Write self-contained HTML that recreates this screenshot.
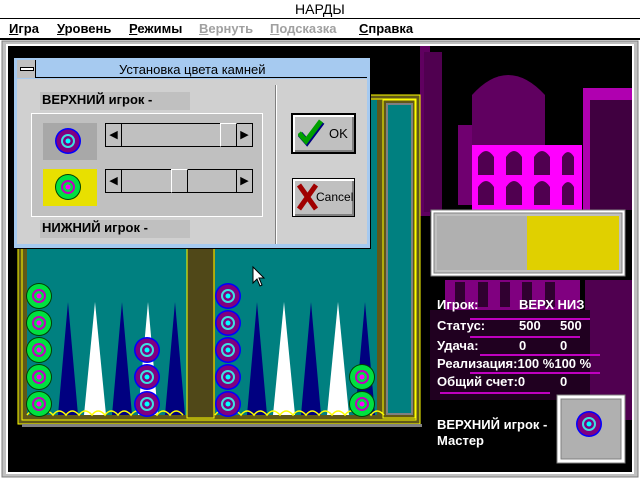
<!DOCTYPE html>
<html><head><meta charset="utf-8"><style>
*{margin:0;padding:0;box-sizing:border-box}
body{width:640px;height:480px;overflow:hidden;background:#000;font-family:"Liberation Sans","DejaVu Sans",sans-serif;position:relative}
.abs{position:absolute}
.t{position:absolute;font-size:13px;font-weight:bold;color:#000;white-space:nowrap}
.w{color:#fff;font-size:13px;font-weight:bold;position:absolute;white-space:nowrap}
u{text-decoration:underline}
</style></head><body>
<div class="abs" style="left:0;top:0;width:640px;height:19px;background:#fff;border-bottom:1px solid #000"></div>
<div class="t" style="left:295px;top:1px;font-weight:normal;font-size:14px">НАРДЫ</div>
<div class="abs" style="left:0;top:19px;width:640px;height:20px;background:#fff;border-bottom:1px solid #000"></div>
<div class="t" style="left:9px;top:21px"><u>И</u>гра</div>
<div class="t" style="left:57px;top:21px"><u>У</u>ровень</div>
<div class="t" style="left:129px;top:21px"><u>Р</u>ежимы</div>
<div class="t" style="left:199px;top:21px;color:#a0a0a0"><u>В</u>ернуть</div>
<div class="t" style="left:270px;top:21px;color:#a0a0a0"><u>П</u>одсказка</div>
<div class="t" style="left:359px;top:21px"><u>С</u>правка</div>
<svg class="abs" style="left:0;top:40px" width="640" height="440" viewBox="0 40 640 440">
<rect x="0" y="40" width="640" height="440" fill="#fff"/>
<rect x="2" y="41" width="636" height="436" fill="#c0c0c0" stroke="#808080"/>
<rect x="6" y="44" width="628" height="430" fill="#fff"/>
<rect x="8" y="46" width="624" height="426" fill="#000"/>
<!-- architecture -->
<rect x="420" y="46" width="10" height="170" fill="#600060"/>
<rect x="424" y="52" width="18" height="160" fill="#500050"/>
<path d="M472 150 V95 Q508 55 545 95 V150Z" fill="#600060"/>
<rect x="458" y="125" width="14" height="80" fill="#700070"/>
<rect x="472" y="145" width="110" height="65" fill="#ff00ff"/>
<rect x="583" y="88" width="49" height="122" fill="#b000b0"/>
<rect x="590" y="100" width="42" height="110" fill="#400040"/>
<g fill="#500050">
<path d="M478 175v-18q8-12 16 0v18z M506 175v-18q8-12 16 0v18z M534 175v-18q8-12 16 0v18z M562 175v-18q6-10 12 0v18z M478 205v-18q8-12 16 0v18z M506 205v-18q8-12 16 0v18z M534 205v-18q8-12 16 0v18z M562 205v-18q6-10 12 0v18z"/>
</g>
<rect x="445" y="280" width="135" height="30" fill="#800080"/>
<g fill="#300030"><rect x="455" y="282" width="10" height="25"/><rect x="478" y="282" width="10" height="25"/><rect x="500" y="282" width="10" height="25"/><rect x="522" y="282" width="10" height="25"/><rect x="545" y="282" width="10" height="25"/></g>
<rect x="585" y="280" width="47" height="140" fill="#500050"/>
<rect x="430" y="310" width="160" height="90" fill="#200020"/>
<g fill="#c000c0"><rect x="470" y="318" width="120" height="2"/><rect x="470" y="336" width="110" height="2"/><rect x="480" y="354" width="120" height="2"/><rect x="470" y="372" width="130" height="2"/><rect x="440" y="392" width="110" height="2"/></g>
<!-- board -->
<rect x="18" y="95" width="402" height="329" fill="#605818" stroke="#ffff00"/>
<rect x="22" y="99" width="394" height="321" fill="none" stroke="#ffff00"/>
<rect x="27" y="100" width="160" height="315" fill="#008080"/>
<rect x="215" y="100" width="162" height="315" fill="#008080"/>
<rect x="187" y="100" width="27" height="318" fill="#504818" stroke="#ffff00"/>
<rect x="383" y="100" width="32" height="318" fill="#605818" stroke="#ffff00"/>
<rect x="387" y="104" width="25" height="310" fill="#008080" stroke="#808080" stroke-width="2"/>
<rect x="22" y="424" width="400" height="3" fill="#808080"/>
<!-- spires -->
<g>
<polygon points="68,302 78,415 58,415" fill="#000080"/><polygon points="95,302 106,415 84,415" fill="#fff"/>
<polygon points="122,302 132,415 112,415" fill="#000080"/><polygon points="148,302 158,415 138,415" fill="#fff"/>
<polygon points="175,302 185,415 165,415" fill="#000080"/>
<polygon points="257,302 267,415 247,415" fill="#000080"/><polygon points="284,302 295,415 273,415" fill="#fff"/>
<polygon points="311,302 321,415 301,415" fill="#000080"/><polygon points="338,302 349,415 327,415" fill="#fff"/>
<polygon points="365,302 375,415 355,415" fill="#000080"/>
</g>
<path d="M27 415 q6 -8 13 0 q6 -8 13 0 q6-8 13 0 q6-8 13 0 q6-8 13 0 q6-8 13 0 q6-8 13 0 q6-8 13 0 q6-8 13 0 q6-8 13 0 q6-8 13 0 q6-8 13 0 M215 415 q6 -8 13 0 q6 -8 13 0 q6-8 13 0 q6-8 13 0 q6-8 13 0 q6-8 13 0 q6-8 13 0 q6-8 13 0 q6-8 13 0 q6-8 13 0 q6-8 13 0 q6-8 13 0 q6-8 13 0" fill="none" stroke="#ffff00" stroke-width="1.5"/>
<defs>
<g id="gc"><circle r="13" fill="#004000"/><circle r="12" fill="#00e040"/><circle r="6" fill="none" stroke="#c000c0" stroke-width="2"/><circle r="2.5" fill="#ff00ff"/></g>
<g id="pc"><circle r="13" fill="#0000ff"/><circle r="11.5" fill="#800080"/><circle r="6" fill="none" stroke="#40e0e0" stroke-width="2"/><circle r="2.5" fill="#00ffff"/></g>
</defs>
<use href="#gc" x="39" y="296"/><use href="#gc" x="39" y="323"/><use href="#gc" x="39" y="350"/><use href="#gc" x="39" y="377"/><use href="#gc" x="39" y="404"/>
<use href="#pc" x="147" y="350"/><use href="#pc" x="147" y="377"/><use href="#pc" x="147" y="404"/>
<use href="#pc" x="228" y="296"/><use href="#pc" x="228" y="323"/><use href="#pc" x="228" y="350"/><use href="#pc" x="228" y="377"/><use href="#pc" x="228" y="404"/>
<use href="#gc" x="362" y="377"/><use href="#gc" x="362" y="404"/>
<path d="M253 267 v16 l4 -4 l3 7 l2 -1 l-3 -7 h5z" fill="#fff" stroke="#000"/>
<!-- color box -->
<rect x="431" y="210" width="194" height="66" fill="#fff" stroke="#808080"/>
<rect x="434" y="213" width="188" height="60" fill="#c0c0c0" stroke="#808080"/>
<rect x="437" y="216" width="90" height="54" fill="#b0b0b0"/>
<rect x="527" y="216" width="92" height="54" fill="#e0d000"/>
<!-- bottom box -->
<rect x="557" y="395" width="68" height="68" fill="#fff" stroke="#808080"/>
<rect x="561" y="399" width="60" height="60" fill="#b0b0b0" stroke="#808080"/>
<use href="#pc" x="589" y="424"/>
</svg>
<div class="w" style="left:437px;top:297px">Игрок:</div><div class="w" style="left:519px;top:297px">ВЕРХ НИЗ</div>
<div class="w" style="left:437px;top:318px">Статус:</div><div class="w" style="left:519px;top:318px">500</div><div class="w" style="left:560px;top:318px">500</div>
<div class="w" style="left:437px;top:338px">Удача:</div><div class="w" style="left:519px;top:338px">0</div><div class="w" style="left:560px;top:338px">0</div>
<div class="w" style="left:437px;top:356px">Реализация:100 %100 %</div>
<div class="w" style="left:437px;top:374px">Общий счет:0</div><div class="w" style="left:560px;top:374px">0</div>
<div class="w" style="left:437px;top:417px">ВЕРХНИЙ игрок -</div>
<div class="w" style="left:437px;top:433px">Мастер</div>
<!-- dialog -->
<div class="abs" style="left:13px;top:57px;width:358px;height:192px;background:#a6caf0;border:1px solid #000"></div>
<div class="abs" style="left:17px;top:60px;width:350px;height:18px;background:#a6caf0;border-bottom:1px solid #000"></div>
<div class="abs" style="left:17px;top:60px;width:19px;height:18px;background:#c0c0c0;border-right:1px solid #000"></div>
<div class="abs" style="left:20px;top:67px;width:14px;height:4px;background:#fff;border:1px solid #000"></div>
<div class="t" style="left:119px;top:62px;font-weight:normal;font-size:13px">Установка цвета камней</div>
<div class="abs" style="left:17px;top:79px;width:350px;height:165px;background:#d0d0d0"></div>
<div class="abs" style="left:275px;top:85px;width:2px;height:159px;background:#808080;border-right:1px solid #fff"></div>
<div class="abs" style="left:40px;top:92px;width:150px;height:18px;background:#c0c0c0"></div>
<div class="t" style="left:42px;top:92px">ВЕРХНИЙ игрок -</div>
<div class="abs" style="left:31px;top:113px;width:232px;height:104px;background:#c0c0c0;border:1px solid #fff"></div>
<div class="abs" style="left:43px;top:123px;width:54px;height:37px;background:#a8a8a8"></div>
<div class="abs" style="left:43px;top:169px;width:54px;height:37px;background:#e8e000"></div>
<svg class="abs" style="left:43px;top:123px" width="54" height="84"><use href="#pc" x="25" y="18"/><use href="#gc" x="25" y="64"/></svg>
<div class="abs" style="left:105px;top:123px;width:148px;height:24px;background:#c0c0c0;border:1px solid #000"></div>
<div class="abs" style="left:105px;top:123px;width:17px;height:24px;background:#c0c0c0;border:1px solid #000;font-size:11px;text-align:center;line-height:22px">◀</div>
<div class="abs" style="left:236px;top:123px;width:17px;height:24px;background:#c0c0c0;border:1px solid #000;font-size:11px;text-align:center;line-height:22px">▶</div>
<div class="abs" style="left:220px;top:123px;width:17px;height:24px;background:#c0c0c0;border:1px solid #000;border-top-color:#fff;border-left-color:#fff"></div>
<div class="abs" style="left:105px;top:169px;width:148px;height:24px;background:#c0c0c0;border:1px solid #000"></div>
<div class="abs" style="left:105px;top:169px;width:17px;height:24px;background:#c0c0c0;border:1px solid #000;font-size:11px;text-align:center;line-height:22px">◀</div>
<div class="abs" style="left:236px;top:169px;width:17px;height:24px;background:#c0c0c0;border:1px solid #000;font-size:11px;text-align:center;line-height:22px">▶</div>
<div class="abs" style="left:171px;top:169px;width:17px;height:24px;background:#c0c0c0;border:1px solid #000;border-top-color:#fff;border-left-color:#fff"></div>
<div class="abs" style="left:40px;top:220px;width:150px;height:18px;background:#c0c0c0"></div>
<div class="t" style="left:42px;top:220px">НИЖНИЙ игрок -</div>
<div class="abs" style="left:291px;top:113px;width:65px;height:41px;background:#c0c0c0;border:2px solid #000;box-shadow:inset 2px 2px #fff,inset -2px -2px #808080"></div>
<svg class="abs" style="left:298px;top:118px" width="28" height="30"><path d="M2 16 l7 8 l15 -20" fill="none" stroke="#000080" stroke-width="6"/><path d="M1 15 l7 8 l15 -20" fill="none" stroke="#00a000" stroke-width="5"/></svg>
<div class="abs" style="left:329px;top:126px;font-size:13px">OK</div>
<div class="abs" style="left:292px;top:178px;width:63px;height:39px;background:#c0c0c0;border:1px solid #000;box-shadow:inset 2px 2px #fff,inset -2px -2px #808080"></div>
<svg class="abs" style="left:296px;top:182px" width="24" height="30"><path d="M3 3 L20 27 M20 3 L3 27" stroke="#a00000" stroke-width="5"/></svg>
<div class="abs" style="left:316px;top:190px;font-size:12px">Cancel</div>
</body></html>
